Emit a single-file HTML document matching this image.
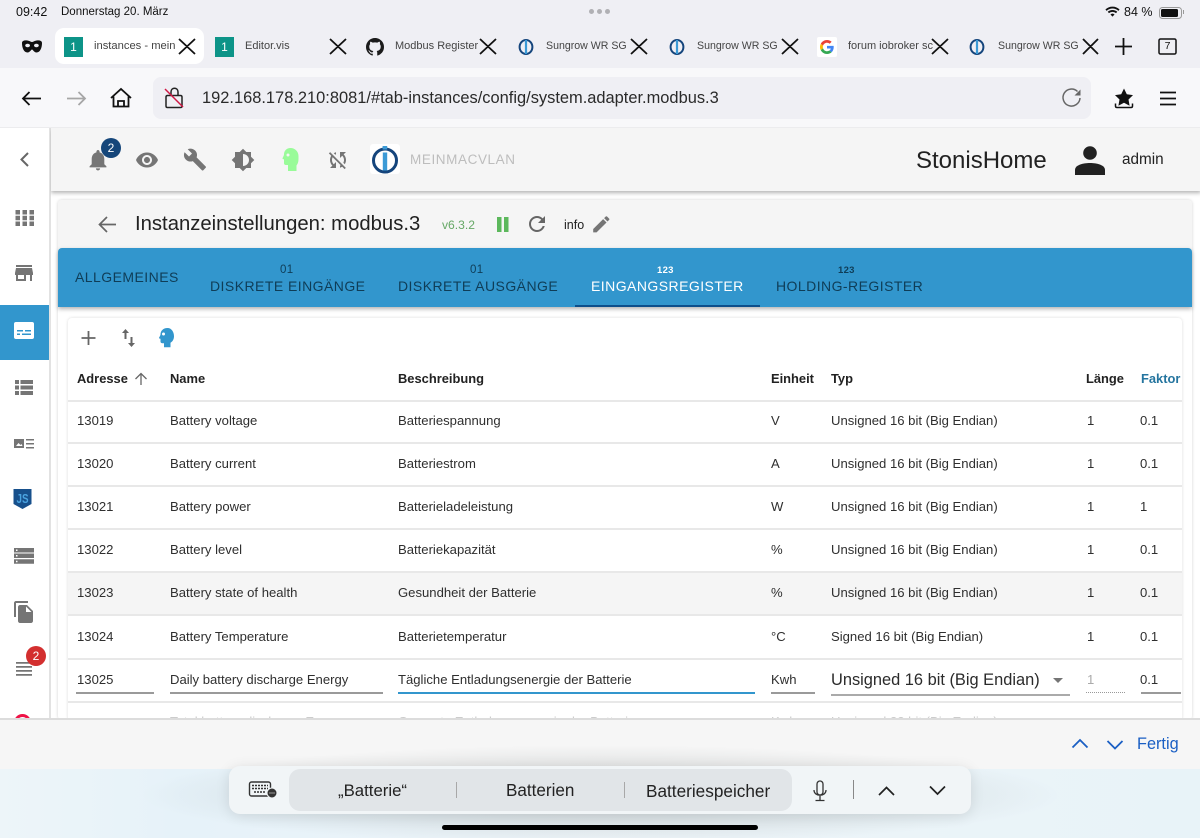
<!DOCTYPE html>
<html lang="de"><head><meta charset="utf-8"><title>instances</title>
<style>
html,body{margin:0;padding:0;width:1200px;height:838px;overflow:hidden;background:#fff;font-family:"Liberation Sans",sans-serif;color:#1f1f1f}
.a{position:absolute;white-space:nowrap}
.t{position:absolute;white-space:nowrap;font-size:13.1px;line-height:16px;color:#2f2f2f}
.tab{position:absolute;white-space:nowrap;font-size:10.6px;line-height:14px;color:#444;top:39px}
.tk{position:absolute;white-space:nowrap;font-size:14px;line-height:16px;letter-spacing:.45px;color:#0f3d57;top:278px}
.sm{position:absolute;white-space:nowrap;font-size:11.5px;line-height:12px;color:#0f3d57;letter-spacing:.3px;top:264px}
.h{position:absolute;white-space:nowrap;font-size:12.9px;line-height:16px;font-weight:bold;color:#222;top:371px}
.line{position:absolute;left:68px;width:1114px;height:1.5px;background:#e8e8e8}
svg{position:absolute;overflow:visible}
.u{position:absolute;height:1.5px;background:#9a9a9a;top:692px}
</style></head><body>
<div class="a" style="left:0;top:0;width:1200px;height:68px;background:#efeff4"></div>
<div class="a" style="left:0;top:68px;width:1200px;height:60px;background:#f8f8fa"></div>
<div class="a" style="left:0;top:127px;width:1200px;height:1px;background:#ececee"></div>
<div class="a" style="left:16px;top:4px;font-size:12.5px;line-height:16px;color:#111">09:42</div>
<div class="a" style="left:61px;top:4px;font-size:11.5px;line-height:16px;color:#111">Donnerstag 20. März</div>
<div class="a" style="left:589px;top:9px;width:5px;height:5px;border-radius:3px;background:#b0b0b4;box-shadow:8px 0 #b0b0b4,16px 0 #b0b0b4"></div>
<svg style="left:1105px;top:6px" width="15" height="12" viewBox="0 0 16 13"><path d="M1 4.500C5 .8 11 .8 15 4.500M3.500 7C6 4.800 10 4.800 12.500 7" fill="none" stroke="#111" stroke-width="2"/><path d="M5.800 9.200C7.200 8 8.800 8 10.200 9.200L8 11.500Z" fill="#111"/></svg>
<div class="a" style="left:1124px;top:4px;font-size:12.5px;line-height:16px;color:#111">84 %</div>
<div class="a" style="left:1159px;top:7px;width:21px;height:10px;border:1px solid #999;border-radius:3.5px"></div>
<div class="a" style="left:1161px;top:9px;width:17px;height:8px;background:#111;border-radius:1.5px"></div>
<div class="a" style="left:1183px;top:10px;width:1px;height:4px;background:#999"></div>

<!-- tab bar -->
<svg style="left:22px;top:40px" width="20" height="13" viewBox="0 0 20 13"><path d="M0 3C0 .5 3 0 6 .6 8 1 9 2 10 2S12 1 14 .6C17 0 20 .5 20 3 20 8 18 12.500 14.500 12.500 12 12.500 11 9.500 10 9.500S8 12.500 5.500 12.500C2 12.500 0 8 0 3Z" fill="#111"/><ellipse cx="5.600" cy="5.500" rx="2.400" ry="1.700" fill="#efeff4"/><ellipse cx="14.400" cy="5.500" rx="2.400" ry="1.700" fill="#efeff4"/></svg>
<div class="a" style="left:55px;top:28px;width:149px;height:36px;background:#fff;border-radius:9px"></div>
<div class="a" style="left:64px;top:37px;width:19px;height:20px;background:#0d9488;color:#fff;font-size:12px;line-height:20px;text-align:center">1</div>
<div class="tab" style="left:94px;font-size:11.2px">instances - mein</div>
<div class="a" style="left:215px;top:37px;width:19px;height:20px;background:#0d9488;color:#fff;font-size:12px;line-height:20px;text-align:center">1</div>
<div class="tab" style="left:245px;font-size:11px">Editor.vis</div>
<svg style="left:366px;top:38px" width="18" height="18" viewBox="0 0 16 16"><path fill="#1b1b1b" d="M8 0C3.580 0 0 3.580 0 8c0 3.540 2.290 6.530 5.470 7.590.4.070.55-.17.55-.38v-1.340c-2.230.48-2.700-1.070-2.700-1.070-.36-.92-.89-1.170-.89-1.170-.73-.5.05-.49.05-.49.8.060 1.230.82 1.230.82.71 1.220 1.870.87 2.330.66.070-.52.28-.87.5-1.070-1.780-.2-3.640-.89-3.640-3.950 0-.87.31-1.590.82-2.150-.08-.2-.36-1.020.08-2.120 0 0 .67-.21 2.200.82a7.600 7.600 0 0 1 4 0c1.530-1.040 2.200-.82 2.200-.82.44 1.100.16 1.920.08 2.120.51.56.82 1.270.82 2.150 0 3.070-1.870 3.750-3.650 3.950.29.25.54.73.54 1.480v2.200c0 .21.15.46.55.38A8 8 0 0 0 16 8c0-4.420-3.580-8-8-8Z"/></svg>
<div class="tab" style="left:395px;font-size:11px">Modbus Register</div>
<svg style="left:518px;top:38px" width="16" height="18" viewBox="0 0 16 18"><ellipse cx="8" cy="9" rx="6.400" ry="7" fill="none" stroke="#15457c" stroke-width="2"/><rect x="6.900" y="2" width="2.200" height="14" fill="#3b9ad6"/></svg>
<div class="tab" style="left:546px">Sungrow WR SG</div>
<svg style="left:669px;top:38px" width="16" height="18" viewBox="0 0 16 18"><ellipse cx="8" cy="9" rx="6.400" ry="7" fill="none" stroke="#15457c" stroke-width="2"/><rect x="6.900" y="2" width="2.200" height="14" fill="#3b9ad6"/></svg>
<div class="tab" style="left:697px">Sungrow WR SG</div>
<div class="a" style="left:817px;top:37px;width:20px;height:20px;background:#fff;border-radius:2px"></div>
<svg style="left:820px;top:40px" width="14" height="14" viewBox="0 0 48 48"><path fill="#EA4335" d="M24 9.500c3.500 0 6.700 1.300 9.100 3.500l6.800-6.800C35.800 2.400 30.300 0 24 0 14.600 0 6.500 5.400 2.600 13.200l7.900 6.200C12.400 13.700 17.700 9.500 24 9.500z"/><path fill="#4285F4" d="M47 24.500c0-1.600-.2-3.100-.4-4.500H24v9h12.900c-.6 3-2.200 5.500-4.700 7.200l7.700 6C44.400 37.900 47 31.800 47 24.500z"/><path fill="#FBBC05" d="M10.500 28.600c-.5-1.400-.8-3-.8-4.600s.3-3.200.8-4.600l-7.900-6.200C.9 16.500 0 20.100 0 24s.9 7.500 2.600 10.800l7.900-6.200z"/><path fill="#34A853" d="M24 48c6.500 0 11.900-2.100 15.900-5.800l-7.700-6c-2.200 1.400-4.900 2.300-8.200 2.300-6.300 0-11.600-4.200-13.500-9.900l-7.900 6.200C6.500 42.600 14.600 48 24 48z"/></svg>
<div class="tab" style="left:848px;font-size:11px">forum iobroker sc</div>
<svg style="left:969px;top:38px" width="16" height="18" viewBox="0 0 16 18"><ellipse cx="8" cy="9" rx="6.400" ry="7" fill="none" stroke="#15457c" stroke-width="2"/><rect x="6.900" y="2" width="2.200" height="14" fill="#3b9ad6"/></svg>
<div class="tab" style="left:998px">Sungrow WR SG</div>
<svg style="left:0;top:0" width="1200" height="68" viewBox="0 0 1200 68" fill="none" stroke="#111" stroke-width="1.800"><path d="M179 39l16 15M195 39l-16 15M330 39l16 15M346 39l-16 15M480 39l16 15M496 39l-16 15M631 39l16 15M647 39l-16 15M782 39l16 15M798 39l-16 15M932 39l16 15M948 39l-16 15M1083 39l15 15M1098 39l-15 15M1123.500 38v17M1115 46.500h17"/><rect x="1159" y="39" width="17" height="15" rx="1.500" stroke-width="1.500"/></svg>
<div class="a" style="left:1159px;top:39px;width:17px;text-align:center;font-size:10.5px;line-height:15px;color:#111">7</div>

<!-- url bar -->
<div class="a" style="left:153px;top:77px;height:42px;width:938px;background:#efeff4;border-radius:8px"></div>
<svg style="left:0;top:68px" width="1200" height="60" viewBox="0 68 1200 60" fill="none"><path d="M41 98.500H23M29.500 92l-6.500 6.500 6.500 6.500" stroke="#111" stroke-width="1.800"/><path d="M67 98.500h18M78.500 92l6.500 6.500-6.500 6.500" stroke="#a6a6a6" stroke-width="1.800"/><path d="M111 98l10-9 10 9M113.500 96.500V106.500h15V96.500M118 106.500v-5.500h6v5.500" stroke="#111" stroke-width="1.800"/><path d="M171 95v-3c0-5 7-5 7 0v3M167.500 95.500h13c1 0 1.500 .5 1.500 1.500v9c0 1-.5 1.500-1.500 1.500h-13c-1 0-1.500-.5-1.500-1.500v-9c0-1 .5-1.500 1.500-1.500Z" stroke="#222" stroke-width="1.500"/><path d="M165 89l18 18" stroke="#d01845" stroke-width="1.500"/><path d="M1077.500 91.500A8.500 8.500 0 1 0 1080 98" stroke="#666" stroke-width="1.500"/><path d="M1080.500 89.500v6h-6Z" fill="#666"/><path d="M1124 88.500l2.800 5.700 6.200.9-4.500 4.400 1.100 6.200-5.600-3-5.600 3 1.100-6.200-4.500-4.400 6.200-.9Z" fill="#111"/><path d="M1115.500 103.500v2.500c0 1 .7 1.500 1.500 1.500h14c1 0 1.500-.5 1.500-1.500v-2.500" stroke="#111" stroke-width="1.500"/><path d="M1160 92.500h16M1160 98.500h16M1160 104.500h16" stroke="#111" stroke-width="1.800"/></svg>
<div class="a" style="left:202px;top:87px;font-size:16.43px;line-height:22px;color:#2a2a2a">192.168.178.210:8081/#tab-instances/config/system.adapter.modbus.3</div>

<!-- sidebar -->
<div class="a" style="left:49px;top:128px;width:1.500px;height:592px;background:#e2e2e2"></div>
<div class="a" style="left:0;top:305px;width:49px;height:55px;background:#3296cd"></div>
<svg style="left:0;top:128px" width="50" height="592" viewBox="0 128 50 592" fill="#757575">
<path d="M28 153l-6.500 6.500 6.500 6.500" fill="none" stroke="#666" stroke-width="2"/>
<path d="M16 210h4.500v4.500H16zM23 210h4.500v4.500H23zM30 210h4.500v4.500H30zM16 215.700h4.500v4.500H16zM23 215.700h4.500v4.500H23zM30 215.700h4.500v4.500H30zM16 221.500h4.500v4.500H16zM23 221.500h4.500v4.500H23zM30 221.500h4.500v4.500H30z" transform="translate(-.500 0)"/>
<path transform="translate(12 261)" d="M20 4H4v2h16V4zm1 10v-2l-1-5H4l-1 5v2h1v6h10v-6h4v6h2v-6h1zm-9 4H6v-4h6v4z"/>
<rect x="14" y="322" width="20" height="17" rx="2" fill="#fff"/><path d="M17 330h6v1.500h-6zM25 330h6v1.500h-6zM17 333.500h3v1.500h-3zM22 333.500h9v1.500h-9z" fill="#3296cd"/>
<path d="M15 380h4v4h-4zM20.500 380H33v4H20.500zM15 385.500h4v4h-4zM20.500 385.500H33v4H20.500zM15 391h4v4h-4zM20.500 391H33v4H20.500z"/>
<path d="M14 439h10v9H14z"/><path d="M16 446l2.500-3 2 2 1-1 1 2z" fill="#fff"/><path d="M26 439h8v1.500h-8zM26 443h8v1.500h-8zM26 447h8v1.500h-8z"/>
<path d="M13.500 489h18v15l-9 5-9-5z" fill="#17508c"/><text x="22.500" y="503" text-anchor="middle" font-family="Liberation Sans,sans-serif" font-weight="bold" font-size="12.500" fill="#4aa3e0" textLength="12" lengthAdjust="spacingAndGlyphs">JS</text>
<path d="M14 548h20v4.500H14zM14 553.500h20v4.500H14zM14 559.300h20v4.500H14z"/><path d="M16 549.500h1.500v1.500H16zM16 555h1.500v1.500H16zM16 560.800h1.500v1.500H16z" fill="#fff"/>
<path transform="translate(12 600)" d="M16 1H4c-1.100 0-2 .9-2 2v14h2V3h12V1zm-1 4l6 6v10c0 1.100-.9 2-2 2H7.990C6.890 23 6 22.100 6 21l.01-14c0-1.100.89-2 1.990-2h7zm-1 7h5.500L14 6.500V12z"/>
<path d="M16 662h16v1.700H16zM16 666h16v1.700H16zM16 670h16v1.700H16zM16 674h16v1.700H16z"/>
</svg>
<div class="a" style="left:26px;top:646px;width:20px;height:20px;border-radius:10px;background:#d32f2f;color:#fff;font-size:12px;line-height:20px;text-align:center">2</div>
<div class="a" style="left:14px;top:714px;width:11px;height:11px;border-radius:9px;border:3px solid #ef1246"></div>

<!-- app header -->
<div class="a" style="left:50.500px;top:128px;width:1150px;height:63px;background:#f5f5f5;box-shadow:0 2px 4px rgba(0,0,0,.3);clip-path:inset(0 0 -10px 0)"></div>
<svg style="left:0;top:0" width="1200" height="200" viewBox="0 0 1200 200" fill="#757575">
<path transform="translate(85.400 147.400) scale(1.050)" d="M12 22c1.100 0 2-.9 2-2h-4c0 1.100.89 2 2 2zm6-6v-5c0-3.070-1.640-5.640-4.500-6.320V4c0-.83-.67-1.500-1.500-1.500s-1.500.67-1.500 1.500v.68C7.630 5.360 6 7.920 6 11v5l-2 2v1h16v-1l-2-2z"/>
<path transform="translate(135 148)" d="M12 4.500C7 4.500 2.730 7.610 1 12c1.730 4.390 6 7.500 11 7.500s9.270-3.110 11-7.500c-1.730-4.390-6-7.500-11-7.500zM12 17c-2.760 0-5-2.240-5-5s2.240-5 5-5 5 2.240 5 5-2.240 5-5 5zm0-8c-1.660 0-3 1.340-3 3s1.340 3 3 3 3-1.340 3-3-1.340-3-3-3z"/>
<path transform="translate(183 147.500)" d="M22.700 19l-9.100-9.100c.9-2.300.4-5-1.500-6.900-2-2-5-2.400-7.400-1.300L9 6 6 9 1.600 4.700C.4 7.100.9 10.100 2.900 12.100c1.900 1.900 4.600 2.400 6.900 1.500l9.100 9.100c.4.400 1 .4 1.400 0l2.300-2.300c.5-.4.5-1.100.1-1.400z"/>
<path transform="translate(231 148)" d="M20 15.310L23.310 12 20 8.690V4h-4.690L12 .69 8.690 4H4v4.690L.69 12 4 15.310V20h4.690L12 23.310 15.310 20H20v-4.690zM12 18V6c3.310 0 6 2.690 6 6s-2.690 6-6 6z"/>
<path d="M290.500 148c-4 0-6.500 2.800-6.500 6.500 0 1-1.500 3.500-1.500 4s.8.800 1.500.800v4c0 1 .8 1.700 1.700 1.700h2.300v6h8.500v-5.500c1.200-1.500 2-3.500 2-6.500V156c0-4.500-3.500-8-8-8Z" fill="#99fb99"/><circle cx="288" cy="155" r="1.500" fill="#f5f5f5"/>
<path transform="translate(326 148)" d="M10 6.350V4.260c-.8.210-1.550.54-2.230.96l1.460 1.460c.25-.12.5-.24.77-.33zm-7.140-.94l2.360 2.360C4.450 8.990 4 10.440 4 12c0 2.210.91 4.200 2.360 5.640L4 20h6v-6l-2.240 2.240C6.680 15.150 6 13.660 6 12c0-1 .25-1.940.68-2.770l8.080 8.080c-.25.130-.5.25-.77.340v2.090c.8-.21 1.550-.54 2.230-.96l2.360 2.360 1.270-1.270L4.140 4.140 2.860 5.410zM20 4h-6v6l2.240-2.240C17.320 8.850 18 10.340 18 12c0 1-.25 1.940-.68 2.770l1.460 1.460C19.550 15.010 20 13.560 20 12c0-2.210-.91-4.200-2.360-5.640L20 4z"/>
</svg>
<div class="a" style="left:101px;top:138px;width:20px;height:20px;border-radius:10px;background:#15467a;color:#fff;font-size:12px;line-height:20px;text-align:center">2</div>
<div class="a" style="left:370px;top:144px;width:30px;height:30px;background:#fff;border-radius:3px"></div>
<svg style="left:370px;top:144px" width="30" height="30" viewBox="0 0 30 30"><circle cx="15" cy="16.500" r="11.500" fill="none" stroke="#15457c" stroke-width="3"/><rect x="12.600" y="2" width="4.600" height="3.500" fill="#3b9ad6"/><rect x="12.800" y="8.500" width="4.400" height="18" fill="#3b9ad6"/></svg>
<div class="a" style="left:410px;top:152px;font-size:13.5px;line-height:16px;letter-spacing:.6px;color:#bdbdbd">MEINMACVLAN</div>
<div class="a" style="left:916px;top:147px;font-size:24px;line-height:28px;color:#212121">StonisHome</div>
<svg style="left:1074px;top:144px" width="32" height="32" viewBox="0 0 32 32" fill="#212121"><circle cx="16" cy="9" r="6.800"/><path d="M1 31v-5c0-5 8-7 15-7s15 2 15 7v5Z"/></svg>
<div class="a" style="left:1122px;top:151px;font-size:15.3px;line-height:18px;color:#212121">admin</div>

<!-- card -->
<div class="a" style="left:58px;top:200px;width:1134px;height:520px;background:#fff;border-radius:4px;box-shadow:0 0 3px rgba(0,0,0,.18)"></div>
<div class="a" style="left:58px;top:200px;width:1134px;height:60px;background:#f5f5f5;border-radius:4px 4px 0 0"></div>
<svg style="left:0;top:0" width="700" height="250" viewBox="0 0 700 250" fill="none"><path d="M116 224.500H100M107 217l-7.500 7.500 7.500 7.500" stroke="#666" stroke-width="1.700"/><path d="M497 217h4.500v15H497zM504 217h4.500v15H504z" fill="#5cb85c"/><path transform="translate(525 212)" fill="#666" d="M17.650 6.350C16.200 4.900 14.210 4 12 4c-4.420 0-7.990 3.580-7.990 8s3.570 8 7.990 8c3.730 0 6.840-2.550 7.730-6h-2.080c-.82 2.330-3.040 4-5.650 4-3.310 0-6-2.690-6-6s2.690-6 6-6c1.660 0 3.140.69 4.220 1.780L13 11h7V4l-2.350 2.350z"/><path transform="translate(590.500 213.500) scale(.9)" fill="#757575" d="M3 17.250V21h3.750L17.810 9.940l-3.750-3.750L3 17.250zM20.710 7.040c.39-.39.39-1.020 0-1.410l-2.340-2.340c-.39-.39-1.020-.39-1.410 0l-1.830 1.830 3.750 3.750 1.830-1.830z"/></svg>
<div class="a" style="left:135px;top:212px;font-size:20.3px;line-height:24px;color:#212121">Instanzeinstellungen: modbus.3</div>
<div class="a" style="left:442px;top:218px;font-size:12.1px;line-height:15px;color:#66a866">v6.3.2</div>
<div class="a" style="left:564px;top:218px;font-size:12.5px;line-height:15px;color:#212121">info</div>

<!-- blue tabs -->
<div class="a" style="left:58px;top:248px;width:1134px;height:59px;background:#3296cd;border-radius:4px 4px 0 0;box-shadow:0 2px 4px rgba(0,0,0,.3)"></div>
<div class="tk" style="left:75px;top:269px">ALLGEMEINES</div>
<div class="sm" style="left:280px">01</div><div class="tk" style="left:210px">DISKRETE EINGÄNGE</div>
<div class="sm" style="left:470px">01</div><div class="tk" style="left:398px">DISKRETE AUSGÄNGE</div>
<div class="sm" style="left:657px;top:265px;color:#fff;font-weight:bold;font-size:9.500px">123</div><div class="tk" style="left:591px;color:#fff">EINGANGSREGISTER</div>
<div class="sm" style="left:838px;top:265px;font-weight:bold;font-size:9.500px">123</div><div class="tk" style="left:776px">HOLDING-REGISTER</div>
<div class="a" style="left:575px;top:305px;width:185px;height:2px;background:#0d4f8b"></div>

<!-- table card -->
<div class="a" style="left:68px;top:318px;width:1114px;height:402px;background:#fff;border-radius:4px 4px 0 0;box-shadow:0 0 3px rgba(0,0,0,.14)"></div>
<svg style="left:0;top:0" width="200" height="360" viewBox="0 0 200 360"><path d="M88.500 331v14M81.500 338h14" stroke="#666" stroke-width="1.800" fill="none"/><path d="M125.500 329l-3.500 4h2.500v6h2v-6h2.500zM131.500 347l3.500-4h-2.500v-6h-2v6H128z" fill="#666"/><path d="M167.500 328c-4.500 0-7 3-7 6.500 0 1-1.500 3-1.500 3.500s1 .7 1.500 .8v3c0 1 1 1.500 2 1.500h1.500v4h6.500v-4.500c2.500-1.500 3.500-4 3.500-6.500 0-4.500-2.500-8.300-6.500-8.300Z" fill="#3296cd"/><circle cx="163.500" cy="334" r="1.500" fill="#fff"/></svg>
<div class="h" style="left:77px">Adresse</div>
<svg style="left:134px;top:372px" width="14" height="14" viewBox="0 0 14 14"><path d="M7 13V1.500M1.500 7L7 1.500 12.500 7" fill="none" stroke="#666" stroke-width="1.300"/></svg>
<div class="h" style="left:170px">Name</div>
<div class="h" style="left:398px">Beschreibung</div>
<div class="h" style="left:771px">Einheit</div>
<div class="h" style="left:831px">Typ</div>
<div class="h" style="left:1086px">Länge</div>
<div class="h" style="left:1141px;color:#25759f">Faktor</div>
<div class="a" style="left:68px;top:572px;width:1114px;height:43px;background:#f5f5f5"></div>
<div class="line" style="top:400px"></div>
<div class="line" style="top:442px"></div>
<div class="line" style="top:485px"></div>
<div class="line" style="top:528px"></div>
<div class="line" style="top:571px"></div>
<div class="line" style="top:614px"></div>
<div class="line" style="top:658px"></div>
<div class="line" style="top:701px"></div>

<div class="t" style="left:77px;top:413px">13019</div><div class="t" style="left:170px;top:413px">Battery voltage</div><div class="t" style="left:398px;top:413px">Batteriespannung</div><div class="t" style="left:771px;top:413px">V</div><div class="t" style="left:831px;top:413px">Unsigned 16 bit (Big Endian)</div><div class="t" style="left:1087px;top:413px">1</div><div class="t" style="left:1140px;top:413px">0.1</div>
<div class="t" style="left:77px;top:456px">13020</div><div class="t" style="left:170px;top:456px">Battery current</div><div class="t" style="left:398px;top:456px">Batteriestrom</div><div class="t" style="left:771px;top:456px">A</div><div class="t" style="left:831px;top:456px">Unsigned 16 bit (Big Endian)</div><div class="t" style="left:1087px;top:456px">1</div><div class="t" style="left:1140px;top:456px">0.1</div>
<div class="t" style="left:77px;top:499px">13021</div><div class="t" style="left:170px;top:499px">Battery power</div><div class="t" style="left:398px;top:499px">Batterieladeleistung</div><div class="t" style="left:771px;top:499px">W</div><div class="t" style="left:831px;top:499px">Unsigned 16 bit (Big Endian)</div><div class="t" style="left:1087px;top:499px">1</div><div class="t" style="left:1140px;top:499px">1</div>
<div class="t" style="left:77px;top:542px">13022</div><div class="t" style="left:170px;top:542px">Battery level</div><div class="t" style="left:398px;top:542px">Batteriekapazität</div><div class="t" style="left:771px;top:542px">%</div><div class="t" style="left:831px;top:542px">Unsigned 16 bit (Big Endian)</div><div class="t" style="left:1087px;top:542px">1</div><div class="t" style="left:1140px;top:542px">0.1</div>
<div class="t" style="left:77px;top:585px">13023</div><div class="t" style="left:170px;top:585px">Battery state of health</div><div class="t" style="left:398px;top:585px">Gesundheit der Batterie</div><div class="t" style="left:771px;top:585px">%</div><div class="t" style="left:831px;top:585px">Unsigned 16 bit (Big Endian)</div><div class="t" style="left:1087px;top:585px">1</div><div class="t" style="left:1140px;top:585px">0.1</div>
<div class="t" style="left:77px;top:629px">13024</div><div class="t" style="left:170px;top:629px">Battery Temperature</div><div class="t" style="left:398px;top:629px">Batterietemperatur</div><div class="t" style="left:771px;top:629px">°C</div><div class="t" style="left:831px;top:629px">Signed 16 bit (Big Endian)</div><div class="t" style="left:1087px;top:629px">1</div><div class="t" style="left:1140px;top:629px">0.1</div>
<div class="t" style="left:77px;top:672px">13025</div><div class="t" style="left:170px;top:672px">Daily battery discharge Energy</div><div class="t" style="left:398px;top:672px">Tägliche Entladungsenergie der Batterie</div><div class="t" style="left:771px;top:672px">Kwh</div><div class="a" style="left:831px;top:670px;font-size:16.4px;line-height:20px;color:#2b2b2b">Unsigned 16 bit (Big Endian)</div><div class="t" style="left:1087px;top:672px;color:#aaa">1</div><div class="t" style="left:1140px;top:672px">0.1</div>
<div class="u" style="left:76px;width:78px"></div>
<div class="u" style="left:170px;width:213px"></div>
<div class="u" style="left:398px;width:357px;height:2px;background:#3296cd"></div>
<div class="u" style="left:771px;width:44px"></div>
<div class="u" style="left:831px;width:239px;top:694px;height:2px;background:#aaa"></div>
<div class="u" style="left:1086px;width:39px;height:0;background:none;border-top:1px dotted #999"></div>
<div class="u" style="left:1141px;width:40px"></div>
<div class="a" style="left:1053px;top:678px;width:0;height:0;border-left:5.500px solid transparent;border-right:5.500px solid transparent;border-top:5.500px solid #757575"></div>
<div class="t" style="left:170px;top:714px;color:#ccc">Total battery discharge Energy</div><div class="t" style="left:398px;top:714px;color:#ccc">Gesamte Entladungsenergie der Batterie</div><div class="t" style="left:771px;top:714px;color:#ccc">Kwh</div><div class="t" style="left:831px;top:714px;color:#ccc">Unsigned 32 bit (Big Endian)</div>

<!-- keyboard accessory -->
<div class="a" style="left:0;top:719px;width:1200px;height:50px;background:#f6f6f6"></div>
<div class="a" style="left:0;top:718px;width:1200px;height:1.500px;background:#dcdcdc"></div>
<div class="a" style="left:0;top:769px;width:1200px;height:69px;background:linear-gradient(90deg,#edf5f9,#e6f2f9 15%,#eef5f9 50%,#e8f3f8);"></div>
<div class="a" style="left:0;top:745px;width:1200px;height:93px;background:radial-gradient(ellipse 460px 50px at 600px 50px,rgba(100,110,110,.3),rgba(120,130,130,0))"></div>
<svg style="left:1070px;top:735px" width="55" height="18" viewBox="0 0 55 18" fill="none" stroke="#1a5fc4" stroke-width="1.800"><path d="M2.500 12.500L10 5l7.500 7.500M37.500 6l7.500 7.500L52.500 6"/></svg>
<div class="a" style="left:1137px;top:734px;font-size:16.3px;line-height:20px;color:#1a5fc4">Fertig</div>

<div class="a" style="left:229px;top:766px;width:742px;height:48px;background:#f1f5f7;border-radius:11px;box-shadow:0 2px 14px rgba(0,0,0,.1)"></div>
<div class="a" style="left:289px;top:769px;width:503px;height:42px;background:#e1e5e8;border-radius:11px"></div>
<div class="a" style="left:338px;top:781px;font-size:16.8px;line-height:20px;color:#222">„Batterie“</div>
<div class="a" style="left:506px;top:781px;font-size:17.1px;line-height:20px;color:#222">Batterien</div>
<div class="a" style="left:646px;top:781px;font-size:17.2px;line-height:20px;color:#222">Batteriespeicher</div>
<div class="a" style="left:456px;top:782px;width:1px;height:16px;background:#a8a8a8"></div>
<div class="a" style="left:624px;top:782px;width:1px;height:16px;background:#a8a8a8"></div>
<div class="a" style="left:853px;top:780px;width:1px;height:19px;background:#888"></div>
<svg style="left:229px;top:766px" width="742" height="48" viewBox="229 766 742 48" fill="none" stroke="#333"><rect x="249.500" y="782" width="21" height="14" rx="2" stroke-width="1.400"/><path d="M252 785.500h16M252 788.500h16M254 792h12" stroke-width="1.600" stroke-dasharray="2 1"/><circle cx="272" cy="793" r="5" fill="#333" stroke="#f1f5f7" stroke-width="1"/><path d="M269.500 793h5" stroke="#fff" stroke-dasharray="1 1" stroke-width="1"/><rect x="817" y="781" width="6" height="14" rx="3" stroke-width="1.300"/><path d="M814 790c0 7 12 7 12 0M820 796v4M815.500 800.500h9" stroke-width="1.300"/><path d="M879 795l7.500-7.500L894 795M930 786.500l7.500 7.500L945 786.500" stroke="#222" stroke-width="1.700"/></svg>
<div class="a" style="left:442px;top:825px;width:316px;height:5px;background:#000;border-radius:3px"></div>
</body></html>
